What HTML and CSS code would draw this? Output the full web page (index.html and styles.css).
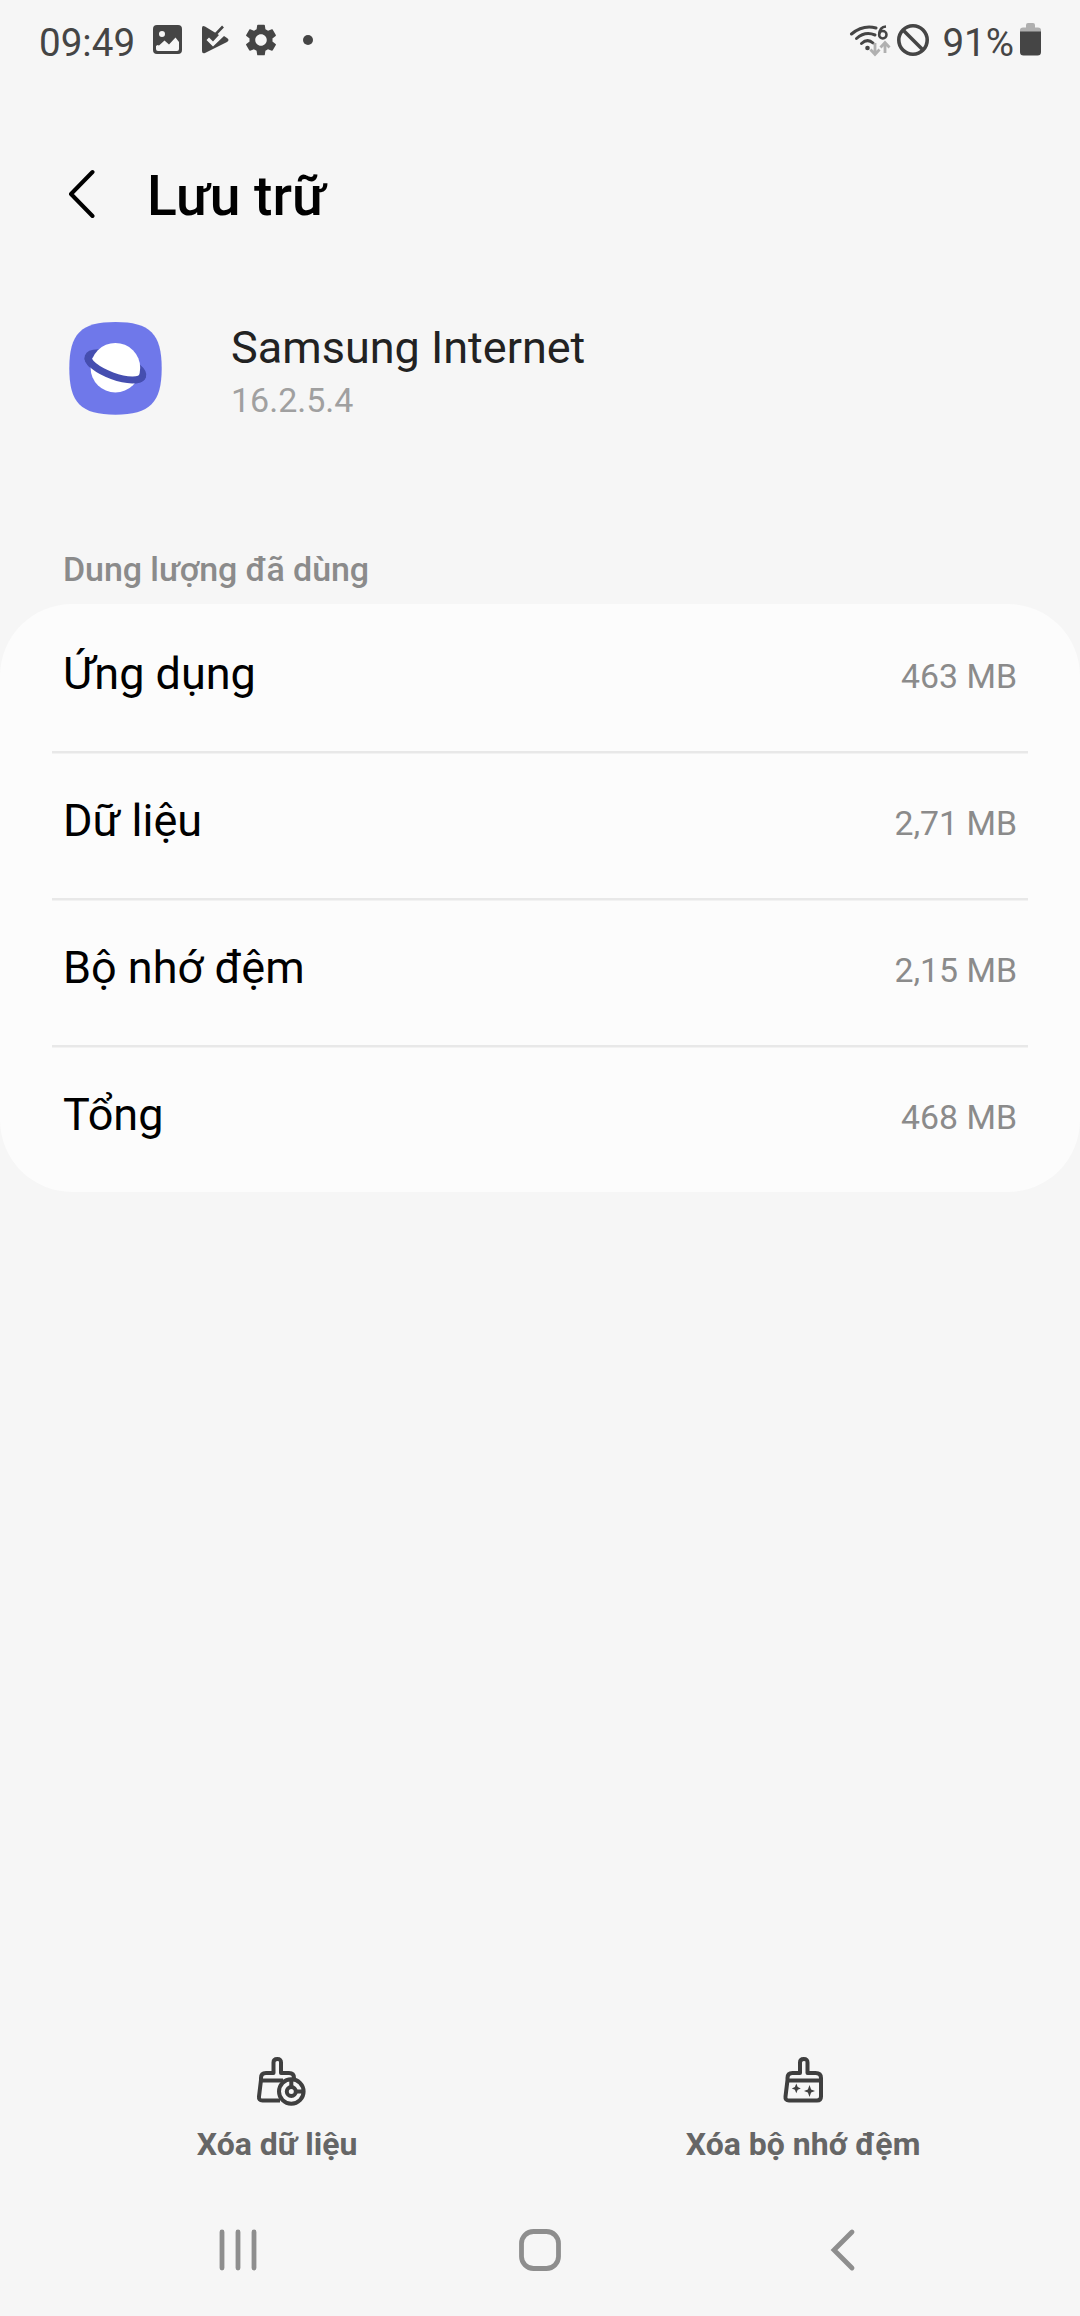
FILE: index.html
```html
<!DOCTYPE html>
<html lang="vi">
<head>
<meta charset="utf-8">
<title>Lưu trữ</title>
<link rel="stylesheet" href="styles.css">
</head>
<body>
<div class="screen">
  <div class="status">
    <div class="status-left">
      <span class="status-text clock">09:49</span>
      <svg class="ic-image" width="30" height="30" viewBox="0 0 30 30"><path fill="#454545" fill-rule="evenodd" d="M4 0H25Q29 0 29 4V25Q29 29 25 29H4Q0 29 0 25V4Q0 0 4 0ZM3 21V24Q3 26 5 26H24Q26 26 26 24V17L22.500 12.500L16 19.500L11.500 15.500L6 20.500L4.500 20ZM9 6A3 3 0 1 0 9 12A3 3 0 1 0 9 6Z"/></svg>
      <svg class="ic-play" width="28" height="30" viewBox="0 0 28 30"><path fill="#454545" d="M3 1.500Q0 0 0 3V26Q0 29 3 28L25 17Q28 15 25 13L22 11L11 21.500L4.500 15L7 12.500L11 16.500L17 10Z"/><path fill="none" stroke="#454545" stroke-width="2.600" d="M21 1.500L11 12L7.500 9"/></svg>
      <svg class="ic-gear" width="32" height="32" viewBox="2 2 20 20"><path fill="#454545" d="M19.140 12.940c.04-.3.06-.61.06-.94 0-.32-.02-.64-.07-.94l2.030-1.580c.18-.14.23-.41.12-.61l-1.920-3.320c-.12-.22-.37-.29-.59-.22l-2.390.96c-.5-.38-1.030-.7-1.620-.94l-.36-2.540c-.04-.24-.24-.41-.48-.41h-3.840c-.24 0-.43.17-.47.41l-.36 2.540c-.59.24-1.130.57-1.620.94l-2.390-.96c-.22-.08-.47 0-.59.22L2.740 8.870c-.12.21-.08.47.12.61l2.030 1.580c-.05.3-.09.63-.09.94s.02.64.07.94l-2.030 1.580c-.18.14-.23.41-.12.61l1.920 3.320c.12.22.37.29.59.22l2.390-.96c.5.38 1.030.7 1.620.94l.36 2.540c.05.24.24.41.48.41h3.840c.24 0 .44-.17.47-.41l.36-2.540c.59-.24 1.130-.56 1.620-.94l2.390.96c.22.08.47 0 .59-.22l1.920-3.320c.12-.22.07-.47-.12-.61l-2.010-1.580zM12 15.600c-1.980 0-3.600-1.620-3.600-3.600s1.620-3.600 3.600-3.600 3.600 1.620 3.600 3.600-1.620 3.600-3.600 3.600z"/></svg>
      <span class="dot"></span>
    </div>
    <div class="status-right">
      <svg class="ic-wifi" width="42" height="34" viewBox="849 23 42 34">
        <g fill="none" stroke="#454545" stroke-width="3" stroke-linecap="round"><path d="M851.500 34Q863 24.500 876 28"/><path d="M856.500 38.500Q865 31 875 35"/><path d="M861.500 43.500Q867.500 38 873 43"/></g>
        <circle cx="867.500" cy="48" r="2.300" fill="#454545"/>
        <g fill="none" stroke="#454545" stroke-width="2.500"><circle cx="882.800" cy="34.700" r="3.700"/><path d="M886 26.500Q879.500 27 879.200 34.500"/></g>
        <g fill="none" stroke="#b0b0b0" stroke-width="2.800"><path d="M875 43V54M870.500 49.500L875 54.500L879.500 49.500"/><path d="M885 53V43M880.500 47.500L885 42.500L889.500 47.500"/></g>
      </svg>
      <svg class="ic-block" width="34" height="34" viewBox="0 0 34 34"><g fill="none" stroke="#454545" stroke-width="3.600"><circle cx="17" cy="17" r="14.200"/><path d="M7 7L27 27"/></g></svg>
      <span class="status-text">91%</span>
      <svg class="ic-battery" width="22" height="34" viewBox="0 0 22 34"><path fill="#b0b0b0" d="M0 9V7Q0 4.500 3 4.500H6V2Q6 0 8 0H13Q15 0 15 2V4.500H18Q21 4.500 21 7V9Z"/><path fill="#454545" d="M0 8.500H21V29Q21 32.500 17.500 32.500H3.500Q0 32.500 0 29Z"/></svg>
    </div>
  </div>

  <div class="header">
    <svg class="back" width="28" height="50" viewBox="0 0 28 50"><path d="M25.500 3L4 25L25.500 47" fill="none" stroke="#000" stroke-width="4" stroke-linecap="round" stroke-linejoin="round"/></svg>
    <h1 class="title">Lưu trữ</h1>
  </div>

  <div class="app">
    <svg class="app-icon" width="94" height="94" viewBox="69 322 94 94">
      <path fill="#6f78ea" d="M115.500 322C150 322 161.700 334 161.700 368.300S150 414.700 115.500 414.700S69.300 403 69.300 368.300S81 322 115.500 322Z"/>
      <ellipse cx="115.400" cy="366.500" rx="28.700" ry="9.800" transform="rotate(20 115.400 366.500)" fill="none" stroke="#454eb0" stroke-width="7.500"/>
      <circle cx="115.400" cy="367.700" r="24.800" fill="#fff"/>
      <path d="M-28.700 0A28.700 9.800 0 0 0 28.700 0" transform="translate(115.400 366.500) rotate(20)" fill="none" stroke="#454eb0" stroke-width="7"/>
    </svg>
    <div class="app-text">
      <div class="app-name">Samsung Internet</div>
      <div class="app-version">16.2.5.4</div>
    </div>
  </div>

  <h2 class="section">Dung lượng đã dùng</h2>
  <div class="card">
    <div class="row"><span class="label">Ứng dụng</span><span class="value">463 MB</span></div>
    <div class="row"><span class="label">Dữ liệu</span><span class="value">2,71 MB</span></div>
    <div class="row"><span class="label">Bộ nhớ đệm</span><span class="value">2,15 MB</span></div>
    <div class="row"><span class="label">Tổng</span><span class="value">468 MB</span></div>
  </div>

  <div class="actions">
    <div class="action">
      <svg width="60" height="52" viewBox="247 2056 60 52">
        <g fill="none" stroke="#3f3f3f" stroke-width="4" stroke-linejoin="round"><path d="M280 2100.500H262.500Q258.500 2100.500 259 2096.500L261 2080V2078Q261 2073 266 2073H273.500V2062.500Q273.500 2059 277.300 2059T281 2062.500V2073H289Q294 2073 294 2078"/><path d="M261 2080.500H283"/><circle cx="291.300" cy="2091.500" r="12.300" fill="#f6f6f6"/><circle cx="291.300" cy="2091.500" r="4.500"/><path d="M291.300 2079V2087M296 2091.500H304"/></g>
      </svg>
      <span class="action-label">Xóa dữ liệu</span>
    </div>
    <div class="action">
      <svg width="60" height="52" viewBox="773.500 2056 60 52">
        <g fill="none" stroke="#3f3f3f" stroke-width="4" stroke-linejoin="round"><path d="M800.500 2073V2062.500Q800.500 2059 804.300 2059T808 2062.500V2073H816Q821.500 2073 821.500 2078V2096.500Q821.500 2100.500 817.500 2100.500H789.500Q785.500 2100.500 786 2096.500L788 2080V2078Q788 2073 793 2073Z"/><path d="M788 2080.500H821.500"/></g>
        <path fill="#3f3f3f" d="M796.800 2083.500L798.200 2087L801.300 2088.400L798.200 2089.800L796.800 2093.300L795.400 2089.800L792.300 2088.400L795.400 2087ZM810 2085L811.600 2089.400L815.500 2091L811.600 2092.600L810 2097L808.400 2092.600L804.500 2091L808.400 2089.400Z"/>
      </svg>
      <span class="action-label">Xóa bộ nhớ đệm</span>
    </div>
  </div>

  <div class="nav">
    <div class="nav-item"><svg width="40" height="44" viewBox="-1 0 40 44"><path d="M4 4V40M20 4V40M36 4V40" stroke="#8e8e8e" stroke-width="4.800" stroke-linecap="round"/></svg></div>
    <div class="nav-item"><svg width="44" height="44" viewBox="0 0 44 44"><rect x="3.500" y="3.500" width="37" height="37" rx="12" fill="none" stroke="#8e8e8e" stroke-width="4.800"/></svg></div>
    <div class="nav-item"><svg width="28" height="44" viewBox="0 0 28 44"><path d="M23 4L5 22L23 40" fill="none" stroke="#8e8e8e" stroke-width="4.800" stroke-linecap="round"/></svg></div>
  </div>
</div>
</body>
</html>
```

FILE: styles.css
```css
* { box-sizing: border-box; }
body { margin: 0; background: #f6f6f6; font-family: Roboto, sans-serif; color: #000; }
svg { display: block; flex: none; }
.screen { width: 1080px; height: 2316px; display: flex; flex-direction: column; }

.status { height: 80px; padding: 0 38px 0 39px; display: flex; justify-content: space-between; color: #454545; }
.status-left, .status-right { display: flex; align-items: center; }
.status-text { font-size: 38.6px; line-height: 44px; padding-top: 6px; }
.clock { width: 95px; }
.ic-image { margin-left: 19px; }
.ic-play { margin-left: 19px; }
.ic-gear { margin-left: 15px; }
.dot { width: 10px; height: 10px; margin-left: 26px; border-radius: 50%; background: #454545; }
.ic-block { margin: 0 12px 0 5px; }
.ic-battery { margin-left: 6px; }

.header { height: 240px; padding: 0 0 8px 67px; display: flex; align-items: center; }
.back { margin-bottom: 5px; }
.title { margin: 0 0 0 52px; font-size: 55.2px; line-height: 64px; font-weight: 500; }

.app { height: 225px; padding-left: 69px; display: flex; align-items: flex-start; }
.app-icon { margin-top: 2px; }
.app-text { margin-left: 68px; }
.app-name { font-size: 45px; line-height: 54px; padding-top: 1px; color: #222; }
.app-version { font-size: 34px; line-height: 50px; color: #a0a0a0; }

.section { margin: 0; height: 59px; padding-left: 63px; font-size: 34px; line-height: 48px; font-weight: 500; letter-spacing: -0.08px; color: #8b8b8b; }
.card { background: #fcfcfc; border-radius: 72px; padding: 0 52px; }
.row { height: 147px; padding: 0 11px; display: flex; align-items: center; justify-content: space-between; }
.row:not(:last-child) { box-shadow: 0 2.5px #e8e8e8; }
.label { font-size: 45px; line-height: 54px; padding-bottom: 8px; }
.value { font-size: 33.8px; line-height: 54px; padding-bottom: 2px; color: #8b8b8b; }

.actions { margin-top: auto; padding: 0 14px; display: flex; }
.action { flex: 1; display: flex; flex-direction: column; align-items: center; gap: 16px; }
.action-label { font-size: 32px; line-height: 40px; font-weight: 700; color: #666; }
.nav { height: 152px; padding: 20px 86px 0; display: flex; }
.nav-item { flex: 1; display: flex; align-items: center; justify-content: center; }
```
